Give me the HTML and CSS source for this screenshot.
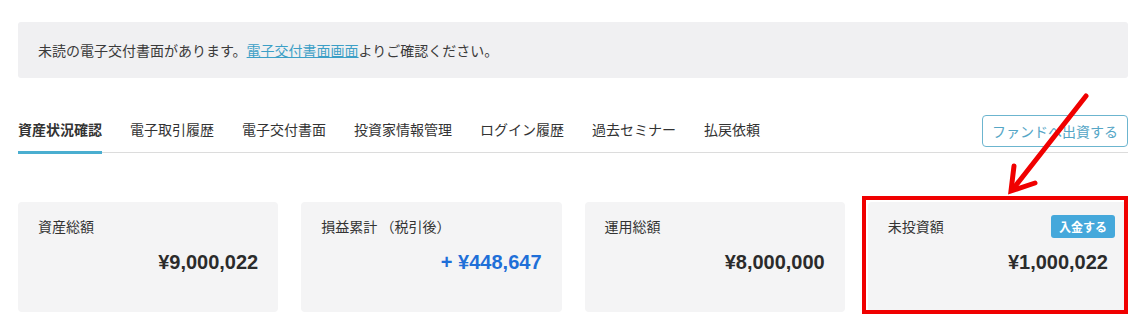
FILE: index.html
```html
<!DOCTYPE html>
<html lang="ja">
<head>
<meta charset="utf-8">
<link rel="stylesheet" href="styles.css">
</head>
<body>
<div class="page">
  <div class="notice">未読の電子交付書面があります。<a class="notice-link" href="#">電子交付書面画面</a>よりご確認ください。</div>

  <nav class="tabs">
    <ul class="tab-list">
      <li class="tab active">資産状況確認</li>
      <li class="tab">電子取引履歴</li>
      <li class="tab">電子交付書面</li>
      <li class="tab">投資家情報管理</li>
      <li class="tab">ログイン履歴</li>
      <li class="tab">過去セミナー</li>
      <li class="tab">払戻依頼</li>
    </ul>
    <button class="invest-btn">ファンドへ出資する</button>
  </nav>

  <section class="cards">
    <div class="card">
      <div class="card-head"><span class="card-label">資産総額</span></div>
      <div class="card-value">¥9,000,022</div>
    </div>
    <div class="card">
      <div class="card-head"><span class="card-label">損益累計 （税引後）</span></div>
      <div class="card-value plus">+ ¥448,647</div>
    </div>
    <div class="card">
      <div class="card-head"><span class="card-label">運用総額</span></div>
      <div class="card-value">¥8,000,000</div>
    </div>
    <div class="card">
      <div class="card-head"><span class="card-label">未投資額</span><span class="badge">入金する</span></div>
      <div class="card-value">¥1,000,022</div>
    </div>
  </section>

  <div class="highlight-box"></div>
  <svg class="annot-arrow" width="1140" height="328" viewBox="0 0 1140 328">
    <line x1="1086" y1="96" x2="1013" y2="189" stroke="#f00000" stroke-width="5" stroke-linecap="round"/>
    <polyline points="1014,166 1011,191 1035,183" fill="none" stroke="#f00000" stroke-width="5" stroke-linecap="round" stroke-linejoin="miter"/>
  </svg>
</div>
</body>
</html>
```

FILE: styles.css
```css
* { box-sizing: border-box; }

html, body {
  margin: 0;
  padding: 0;
  background: #ffffff;
}

body {
  font-family: "Noto Sans CJK JP", "Noto Sans", sans-serif;
  color: #333333;
  font-size: 14px;
}

.page {
  position: relative;
  width: 1140px;
  height: 328px;
  padding: 22px 12px 0 18px;
  overflow: hidden;
}

.notice {
  height: 56px;
  background: #f0f0f2;
  border-radius: 3px;
  padding: 0 20px;
  display: flex;
  align-items: center;
  font-size: 14px;
  line-height: 20px;
  color: #3a3a3a;
}

.notice-link {
  color: #3c9fc6;
  text-decoration: underline;
}

.tabs {
  margin-top: 36px;
  height: 39px;
  display: flex;
  align-items: flex-start;
  border-bottom: 1px solid #dcdcdc;
}

.tab-list {
  list-style: none;
  margin: 0;
  padding: 0;
  display: flex;
  gap: 28px;
  align-self: flex-end;
}

.tab {
  font-size: 14px;
  line-height: 20px;
  padding-bottom: 12px;
  border-bottom: 3px solid transparent;
  margin-bottom: -2px;
  color: #333333;
}

.tab.active {
  font-weight: bold;
  border-bottom-color: #4aaed0;
}

.invest-btn {
  margin-left: auto;
  margin-top: 1px;
  height: 32px;
  padding: 0 9px;
  border: 1px solid #6cb5cf;
  border-radius: 4px;
  background: #ffffff;
  color: #55a6c6;
  font-family: "Noto Sans CJK JP", "Noto Sans", sans-serif;
  font-size: 14px;
  line-height: 20px;
}

.cards {
  margin-top: 49px;
  display: grid;
  grid-template-columns: repeat(4, 1fr);
  gap: 23px;
}

.card {
  height: 110px;
  background: #f4f4f5;
  border-radius: 4px;
  padding: 14px 20px 0 20px;
}

.card-head {
  display: flex;
  align-items: center;
  justify-content: space-between;
  height: 20px;
  margin-right: -7px;
}

.card-label {
  font-size: 14px;
  line-height: 20px;
  color: #333333;
}

.badge {
  display: inline-block;
  height: 23px;
  line-height: 23px;
  padding: 0 8px;
  background: #45a8db;
  color: #ffffff;
  font-size: 12px;
  font-weight: bold;
  border-radius: 3px;
}

.card-value {
  margin-top: 14px;
  text-align: right;
  font-family: "Liberation Sans", Arial, sans-serif;
  font-weight: bold;
  font-size: 20px;
  line-height: 24px;
  color: #2b2b2b;
}

.card-value.plus {
  color: #1f6fd8;
}

.highlight-box {
  position: absolute;
  left: 862px;
  top: 196px;
  width: 266px;
  height: 118px;
  border: 4px solid #f00000;
  pointer-events: none;
}

.annot-arrow {
  position: absolute;
  left: 0;
  top: 0;
  pointer-events: none;
}
```
